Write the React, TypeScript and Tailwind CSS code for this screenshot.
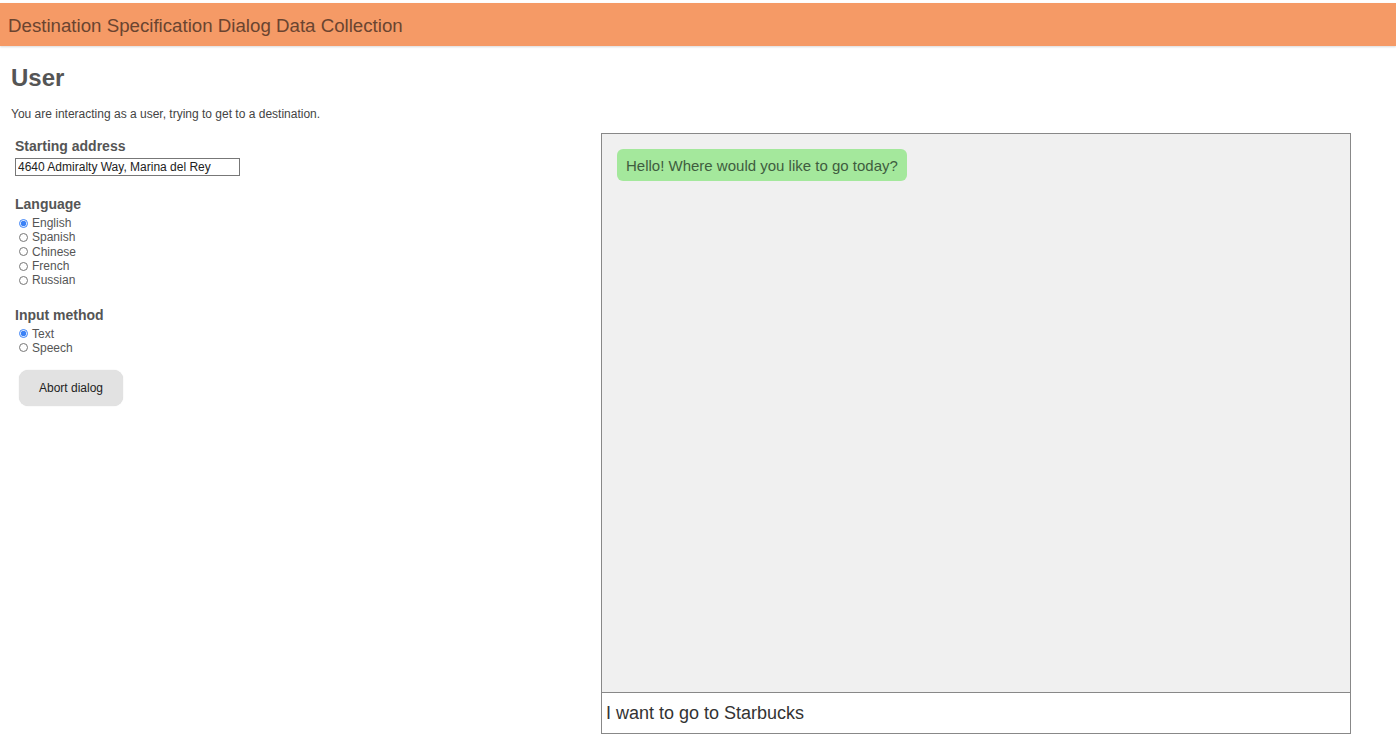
import React from 'react';

const languages = ['English', 'Spanish', 'Chinese', 'French', 'Russian'];
const methods = ['Text', 'Speech'];

function RadioList({ name, items, checked }: { name: string; items: string[]; checked: string }) {
  return (
    <div className="flex flex-col">
      {items.map((item) => (
        <label key={item} className="flex items-center h-[14.3px] text-[12px] text-[#555] leading-none">
          <input
            type="radio"
            name={name}
            defaultChecked={item === checked}
            className="w-[9px] h-[9px] ml-[4px] mr-[4px] accent-[#3b82f6]"
          />
          {item}
        </label>
      ))}
    </div>
  );
}

export default function App() {
  return (
    <div className="w-[1396px] h-[738px] bg-white overflow-hidden font-['Liberation_Sans',Arial,sans-serif]">
      <div className="h-[3px]" />
      <header className="h-[43px] bg-[#f59a66] flex items-center px-[8px] pt-[3px] shadow-[0_1px_2px_rgba(0,0,0,0.15)]">
        <h1 className="text-[18.7px] text-[#6a4430]">Destination Specification Dialog Data Collection</h1>
      </header>

      <main className="pl-[11px]">
        <h2 className="mt-[18px] text-[24px] font-bold text-[#555] leading-[28px]">User</h2>
        <p className="mt-[15px] text-[12px] text-[#444] leading-[14px]">
          You are interacting as a user, trying to get to a destination.
        </p>

        <div className="flex mt-[12px]">
          <section className="w-[590px] pl-[4px] pt-[5px]">
            <h3 className="text-[14px] font-bold text-[#555] leading-[16px]">Starting address</h3>
            <input
              type="text"
              defaultValue="4640 Admiralty Way, Marina del Rey"
              className="mt-[4px] w-[225px] h-[18px] border border-[#777] px-[2px] text-[12px] text-[#222] outline-none"
            />

            <h3 className="mt-[18px] text-[14px] font-bold text-[#555] leading-[16px]">Language</h3>
            <div className="mt-[4px]">
              <RadioList name="lang" items={languages} checked="English" />
            </div>

            <h3 className="mt-[20px] text-[14px] font-bold text-[#555] leading-[16px]">Input method</h3>
            <div className="mt-[3px]">
              <RadioList name="method" items={methods} checked="Text" />
            </div>

            <button className="mt-[15px] ml-[4px] w-[104px] h-[36px] rounded-[9px] bg-[#e2e2e2] text-[12px] text-[#222] shadow-[0_0_1px_rgba(0,0,0,0.2)]">
              Abort dialog
            </button>
          </section>

          <section className="w-[750px] flex flex-col">
            <div className="h-[560px] bg-[#f0f0f0] border border-[#888] p-[15px]">
              <div className="inline-block bg-[#a4e89c] rounded-[6px] px-[9px] h-[32px] leading-[33px] text-[15px] text-[#3f5d3f]">
                Hello! Where would you like to go today?
              </div>
            </div>
            <input
              type="text"
              defaultValue="I want to go to Starbucks"
              className="h-[41px] border border-t-0 border-[#888] px-[4px] text-[18px] text-[#333] outline-none bg-white"
            />
          </section>
        </div>
      </main>
    </div>
  );
}
